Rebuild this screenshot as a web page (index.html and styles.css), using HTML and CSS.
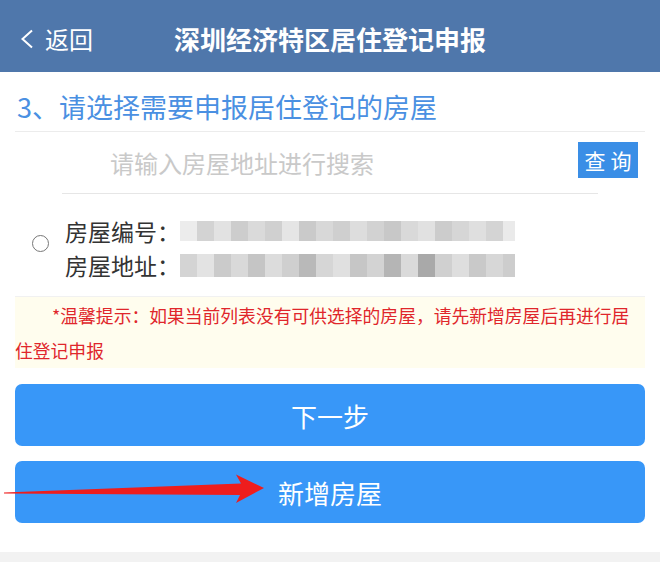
FILE: index.html
```html
<!DOCTYPE html>
<html lang="zh-CN">
<head>
    <meta charset="UTF-8">
    <meta name="viewport" content="width=device-width, initial-scale=1.0">
    <title>深圳经济特区居住登记申报</title>
<link rel="stylesheet" href="styles.css">
</head>
<body>
    <header class="topbar">
        <a class="back">
            <svg class="back-icon" width="14" height="20" viewBox="0 0 14 20">
                <path d="M12 1.5 L2.5 10 L12 18.5" fill="none" stroke="#fff" stroke-width="2"/>
            </svg>
            <span>返回</span>
        </a>
        <h1 class="title">深圳经济特区居住登记申报</h1>
    </header>

    <div class="content">
        <h2 class="step-title">3、请选择需要申报居住登记的房屋</h2>

        <div class="search">
            <input type="text" class="search-input" placeholder="请输入房屋地址进行搜索">
            <button class="search-btn">查询</button>
        </div>

        <label class="house">
            <span class="radio"></span>
            <span class="house-info">
                <span class="row">房屋编号：<span class="blur blur-a"></span></span>
                <span class="row">房屋地址：<span class="blur blur-b"></span></span>
            </span>
        </label>

        <p class="tip">*温馨提示：如果当前列表没有可供选择的房屋，请先新增房屋后再进行居住登记申报</p>

        <button class="btn btn-next">下一步</button>
        <button class="btn btn-add">新增房屋</button>
    </div>

    <!-- 标注箭头 -->
    <svg class="arrow" width="270" height="40" viewBox="0 0 270 40">
        <polygon points="4,22.6 241,13.5 236,4.5 264,18 236,33 240,25 4,23.4" fill="#ee1d1d"/>
    </svg>

    <div class="bottom-strip"></div>
</body>
</html>
```

FILE: styles.css
```css
body{
    margin: 0;
    background-color: #fff;
    font-family: "Noto Sans CJK SC", "Noto Sans", sans-serif;
    position: relative;
}
.topbar{
    height: 72px;
    box-sizing: border-box;
    padding-top: 6px;
    background-color: #4f77ab;
    color: #fff;
    display: grid;
    grid-template-columns: 1fr auto 1fr;
    align-items: center;
}
.back{
    display: flex;
    align-items: center;
    gap: 11px;
    padding-left: 20px;
    font-size: 24px;
    line-height: 30px;
}
.back-icon{
    display: block;
}
.title{
    margin: 0;
    font-size: 26px;
    font-weight: bold;
    line-height: 30px;
}

.content{
    padding: 0 15px;
}
.step-title{
    margin: 0;
    padding: 15px 0 4px 2px;
    font-size: 27px;
    font-weight: normal;
    line-height: 40px;
    color: #4a90e2;
    border-bottom: 1px solid #ececec;
}

.search{
    position: relative;
    height: 62px;
}
.search-input{
    display: block;
    box-sizing: border-box;
    margin: 0 0 0 47px;
    width: 536px;
    height: 62px;
    padding: 0 0 0 48px;
    border: none;
    border-bottom: 1px solid #e6e6e6;
    outline: none;
    font-family: inherit;
    font-size: 24px;
    color: #333;
    background: transparent;
}
.search-input::placeholder{
    color: #c9c9c9;
}
.search-btn{
    position: absolute;
    right: 7px;
    top: 10px;
    width: 60px;
    height: 36px;
    padding: 0;
    border: none;
    background-color: #3a8ee6;
    color: #fff;
    font-family: inherit;
    font-size: 21px;
    letter-spacing: 5px;
    text-indent: 5px;
    line-height: 36px;
}

.house{
    display: flex;
    align-items: center;
    gap: 16px;
    padding: 20px 0 14px 17px;
    border-bottom: 1px solid #f1f1f1;
}
.radio{
    width: 15px;
    height: 15px;
    border: 1.5px solid #777;
    border-radius: 50%;
    margin-bottom: 10px;
}
.house-info{
    display: flex;
    flex-direction: column;
}
.row{
    display: flex;
    align-items: center;
    font-size: 23px;
    line-height: 34px;
    color: #333;
}
.blur{
    display: inline-block;
    width: 335px;
}
.blur-a{
    height: 20px;
    background: linear-gradient(90deg,
        #ececec 0 17px, #d3d3d3 17px 34px, #e2e2e2 34px 51px, #cdcdcd 51px 68px,
        #dadada 68px 85px, #d0d0d0 85px 102px, #e5e5e5 102px 119px, #cacaca 119px 136px,
        #d8d8d8 136px 153px, #cfcfcf 153px 170px, #dddddd 170px 187px, #d2d2d2 187px 204px,
        #c8c8c8 204px 221px, #d9d9d9 221px 238px, #e1e1e1 238px 255px, #cccccc 255px 272px,
        #d6d6d6 272px 289px, #dfdfdf 289px 306px, #d4d4d4 306px 323px, #eaeaea 323px 335px);
}
.blur-b{
    height: 23px;
    background: linear-gradient(90deg,
        #d4d4d4 0 17px, #e3e3e3 17px 34px, #cbcbcb 34px 51px, #d9d9d9 51px 68px,
        #c5c5c5 68px 85px, #dcdcdc 85px 102px, #cfcfcf 102px 119px, #b9b9b9 119px 136px,
        #d6d6d6 136px 153px, #e0e0e0 153px 170px, #c6c6c6 170px 187px, #d3d3d3 187px 204px,
        #b5b5b5 204px 221px, #dadada 221px 238px, #a9a9a9 238px 255px, #d0d0d0 255px 272px,
        #dedede 272px 289px, #c9c9c9 289px 306px, #d7d7d7 306px 323px, #cdcdcd 323px 335px);
}

.tip{
    margin: 0;
    padding: 1px 10px 0 0;
    background-color: #fffdee;
    color: #e0262b;
    font-size: 17.8px;
    line-height: 35px;
    text-indent: 37px;
}

.btn{
    display: block;
    width: 100%;
    height: 62px;
    margin-top: 15px;
    border: none;
    border-radius: 7px;
    background-color: #3897f8;
    color: #fff;
    font-family: inherit;
    font-size: 26px;
}
.btn-next{
    margin-top: 16px;
}

.arrow{
    position: absolute;
    left: 0;
    top: 470px;
}

.bottom-strip{
    margin-top: 29px;
    height: 20px;
    background-color: #f2f2f2;
}
```
